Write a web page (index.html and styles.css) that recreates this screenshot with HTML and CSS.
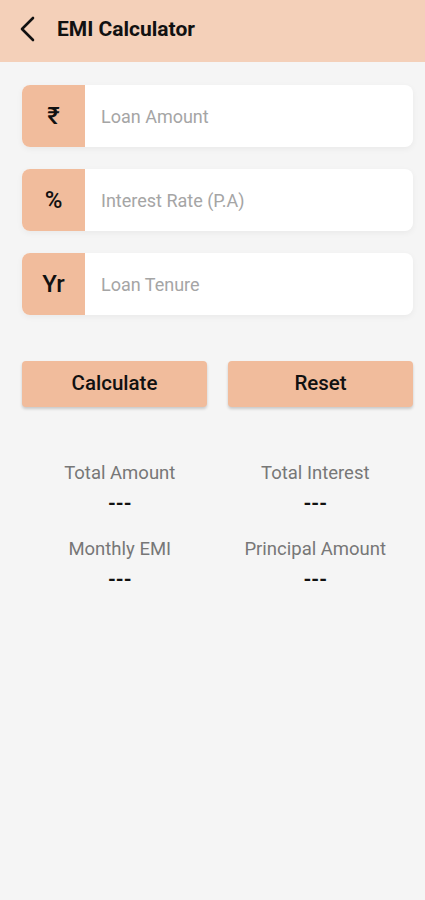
FILE: index.html
```html
<!DOCTYPE html>
<html lang="en">
<head>
  <meta charset="UTF-8" />
  <meta name="viewport" content="width=device-width, initial-scale=1.0" />
  <title>EMI Calculator</title>
  <link rel="stylesheet" href="styles.css">
</head>
<body>
  <header class="app-bar">
    <button class="back-btn" aria-label="Back">
      <svg width="20" height="26" viewBox="0 0 20 26"><path d="M15 2 L4 13 L15 24" fill="none" stroke="#111" stroke-width="2.6" stroke-linecap="round" stroke-linejoin="round"/></svg>
    </button>
    <h1 class="app-title">EMI Calculator</h1>
  </header>

  <main class="content">
    <div class="field">
      <span class="field-icon">₹</span>
      <input class="field-input" type="text" placeholder="Loan Amount">
    </div>
    <div class="field">
      <span class="field-icon">%</span>
      <input class="field-input" type="text" placeholder="Interest Rate (P.A)">
    </div>
    <div class="field">
      <span class="field-icon">Yr</span>
      <input class="field-input" type="text" placeholder="Loan Tenure">
    </div>

    <div class="actions">
      <button class="action-btn">Calculate</button>
      <button class="action-btn">Reset</button>
    </div>

    <div class="results">
      <div class="result">
        <span class="result-label">Total Amount</span>
        <span class="result-value">---</span>
      </div>
      <div class="result">
        <span class="result-label">Total Interest</span>
        <span class="result-value">---</span>
      </div>
      <div class="result">
        <span class="result-label">Monthly EMI</span>
        <span class="result-value">---</span>
      </div>
      <div class="result">
        <span class="result-label">Principal Amount</span>
        <span class="result-value">---</span>
      </div>
    </div>
  </main>
</body>
</html>
```

FILE: styles.css
```css
body {
  margin: 0;
  font-family: Roboto, "Liberation Sans", sans-serif;
  background-color: #f5f5f5;
  color: #111;
  min-height: 900px;
}

.app-bar {
  display: flex;
  align-items: center;
  height: 62px;
  box-sizing: border-box;
  padding: 0 0 5px 16px;
  background-color: #f4d0b9;
}

.back-btn {
  background: none;
  border: none;
  padding: 0;
  width: 24px;
  height: 26px;
  display: flex;
  align-items: center;
  justify-content: center;
  margin-right: 17px;
}

.app-title {
  margin: 0;
  font-size: 21px;
  font-weight: 700;
  color: #111;
}

.content {
  padding: 23px 12px 0 22px;
}

.field {
  display: flex;
  height: 62px;
  margin-bottom: 22px;
  border-radius: 8px;
  background-color: #fff;
  box-shadow: 0 2px 6px rgba(0, 0, 0, 0.05);
  overflow: hidden;
}

.field-icon {
  width: 63px;
  flex-shrink: 0;
  background-color: #f1bc9c;
  display: flex;
  align-items: center;
  justify-content: center;
  font-size: 24px;
  font-weight: 500;
  color: #111;
}

.field-input {
  flex: 1;
  border: none;
  outline: none;
  padding: 0 16px;
  font-family: inherit;
  font-size: 18px;
  background: transparent;
  color: #333;
}

.field-input::placeholder {
  color: #a5a5a5;
}

.actions {
  display: grid;
  grid-template-columns: 1fr 1fr;
  gap: 21px;
  margin-top: 46px;
}

.action-btn {
  height: 46px;
  padding: 0 0 2px;
  border: none;
  border-radius: 4px;
  background-color: #f1bc9c;
  font-family: inherit;
  font-size: 20.5px;
  font-weight: 500;
  color: #111;
  box-shadow: 0 2px 3px rgba(0, 0, 0, 0.18);
  cursor: pointer;
}

.results {
  display: grid;
  grid-template-columns: 1fr 1fr;
  row-gap: 22px;
  margin-top: 54px;
}

.result {
  display: flex;
  flex-direction: column;
  align-items: center;
}

.result-label {
  font-size: 18.5px;
  color: #777;
  line-height: 24px;
}

.result-value {
  font-size: 20px;
  font-weight: 700;
  color: #111;
  line-height: 24px;
  margin-top: 6px;
}
```
